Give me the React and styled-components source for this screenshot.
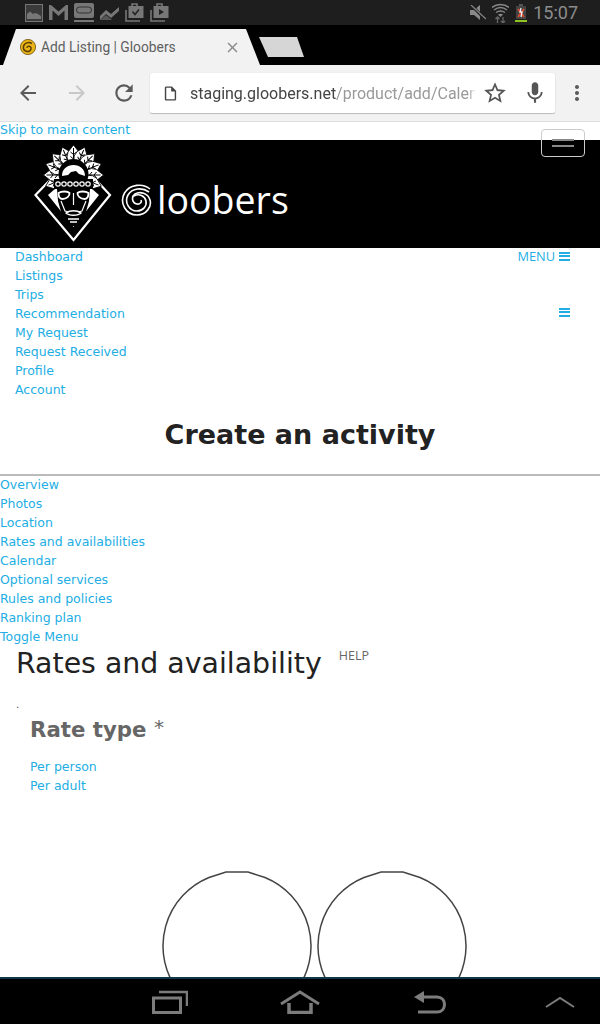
import React from 'react';
import styled, { createGlobalStyle } from 'styled-components';
import { MdArrowBack, MdArrowForward, MdRefresh, MdOutlineInsertDriveFile, MdStarBorder, MdMic, MdMoreVert, MdClose } from 'react-icons/md';

const GlobalStyle = createGlobalStyle`
	html, body { margin: 0; padding: 0; background: #fff; }
	body { font-family: "DejaVu Sans", sans-serif; }
	* { box-sizing: border-box; }
`;

const Screen = styled.div`
	width: 600px;
	height: 1024px;
	display: flex;
	flex-direction: column;
	overflow: hidden;
`;

const StatusBar = styled.div`
	height: 25px;
	flex: none;
	background: #1e1e1e;
	display: flex;
	align-items: center;
	justify-content: space-between;
	padding: 0 22px 0 25px;
	color: #777;
`;

const StatusGroup = styled.div`
	display: flex;
	align-items: center;
	gap: ${(p) => p.$gap || 6}px;
`;

const Clock = styled.span`
	font: 18px Roboto, sans-serif;
	color: #8c8c8c;
`;

const TabStrip = styled.div`
	height: 40px;
	flex: none;
	background: #000;
	display: flex;
	align-items: flex-end;
	padding-left: 3px;
`;

const Tab = styled.div`
	width: 257px;
	height: 36px;
	background: #f2f2f2;
	clip-path: polygon(0 100%, 13px 0, 243px 0, 100% 100%);
	display: flex;
	align-items: center;
	padding: 0 19px 0 17px;
	font: 13.8px Roboto, sans-serif;
	color: #5f5f5f;
`;

const TabTitle = styled.span`
	flex: 1;
	margin-left: 5px;
`;

const NewTab = styled.div`
	width: 45px;
	height: 20px;
	background: #d6d6d6;
	clip-path: polygon(0 0, 38px 0, 100% 100%, 9px 100%);
	margin: 0 0 8px -1px;
`;

const Toolbar = styled.div`
	height: 57px;
	flex: none;
	background: #f2f2f2;
	border-bottom: 1px solid #ddd;
	display: flex;
	align-items: center;
	color: #5a5a5a;
`;

const NavSlot = styled.div`
	width: ${(p) => p.$w}px;
	display: flex;
	justify-content: center;
	color: ${(p) => p.$color || '#5a5a5a'};
`;

const UrlBox = styled.div`
	width: 405px;
	height: 40px;
	margin: 0 10px 0 0;
	background: #fff;
	border-radius: 2px;
	box-shadow: 0 1px 1px #bbb, 0 0 1px #ccc;
	display: flex;
	align-items: center;
	padding-left: 12px;
`;

const UrlText = styled.div`
	width: 286px;
	margin-left: 11px;
	font: 16px Roboto, sans-serif;
	color: #9a9a9a;
	white-space: nowrap;
	overflow: hidden;
	mask-image: linear-gradient(to right, #000 278px, transparent 286px);
	b { font-weight: 400; color: #444; }
`;

const UrlIcon = styled.span`
	display: flex;
	width: 40px;
	justify-content: center;
	color: #555;
`;

const Page = styled.div`
	flex: 1;
	min-height: 0;
	overflow: hidden;
	position: relative;
	background: #fff;
	font-size: 12.5px;
	line-height: 17px;
	color: #22aee4;
`;

const SkipLink = styled.div`
	height: 18px;
	line-height: 15px;
`;

const Header = styled.div`
	height: 108px;
	background: #000;
	display: flex;
	align-items: flex-start;
	padding: 3px 0 0 30px;
`;

const WordMark = styled.div`
	display: flex;
	align-items: center;
	margin: 41px 0 0 1px;
	height: 32px;
	color: #fff;
	font: 500 37.5px/32px "Open Sans", sans-serif;
`;

const Swirl = styled.svg`
	margin-right: 4px;
`;

const Toggle = styled.div`
	position: absolute;
	top: 7px;
	right: 15px;
	width: 44px;
	height: 28px;
	border: 1px solid #ccc;
	border-radius: 4px;
	display: flex;
	flex-direction: column;
	align-items: center;
	justify-content: center;
	gap: 4px;
`;

const ToggleBar = styled.span`
	width: 22px;
	height: 2px;
	background: #888;
`;

const MainNav = styled.div`
	display: flex;
	justify-content: space-between;
	padding: 0 30px 0 15px;
`;

const RightCol = styled.div`
	display: flex;
	flex-direction: column;
	align-items: flex-end;
	gap: 38px;
`;

const MenuLabel = styled.div`
	display: flex;
	align-items: center;
	gap: 4px;
	height: 17px;
	font: 12.8px/17px "Open Sans", sans-serif;
`;

const Burger = styled.span`
	display: block;
	width: 11px;
	height: 9px;
	background: repeating-linear-gradient(to bottom, #22aee4 0, #22aee4 2px, transparent 2px, transparent 3.5px);
`;

const BurgerOnly = styled.div`
	display: flex;
	height: 19px;
	align-items: center;
`;

const NavItem = styled.div`
	height: 19px;
`;

const PageTitle = styled.h1`
	margin: 0;
	padding-top: 16px;
	font-size: 27px;
	line-height: 37px;
	font-weight: 700;
	color: #222;
	text-align: center;
	border-bottom: 2px solid #bbb;
	height: 76px;
`;

const SectionHead = styled.div`
	display: flex;
	align-items: flex-start;
	padding-left: 16px;
	height: 34px;
`;

const SectionTitle = styled.h2`
	margin: 0;
	font-size: 28.4px;
	line-height: 34px;
	font-weight: 400;
	color: #222;
`;

const Help = styled.span`
	margin: -1px 0 0 17px;
	font: 12.5px/19px "Open Sans", sans-serif;
	color: #666;
`;

const Dot = styled.div`
	padding: 15px 0 0 16px;
	height: 36px;
	font-size: 10px;
	color: #555;
`;

const FieldLabel = styled.div`
	padding-left: 30px;
	height: 27px;
	font-size: 21.3px;
	line-height: 20px;
	font-weight: 700;
	color: #666;
	span { font-weight: 400; font-size: 20px; vertical-align: 3px; }
`;

const RadioList = styled.div`
	padding: 14px 0 0 30px;
`;

const CircleRow = styled.div`
	display: flex;
	gap: 5px;
	margin-top: 75px;
	padding-left: 162px;
`;

const BottomBar = styled.div`
	height: 47px;
	flex: none;
	background: #000;
	border-top: 2px solid #10384a;
	display: grid;
	grid-template-columns: repeat(4, 130px);
	padding-left: 105px;
	align-items: center;
	justify-items: center;
	color: #7c7c7c;
`;

const Favicon = () => (
	<svg width="16" height="16" viewBox="0 0 16 16">
		<circle cx="8" cy="8" r="7.6" fill="#e8b416" stroke="#6e4f08" strokeWidth="0.8" />
		<path d="M12 4.6C9 2.6 4 3.6 3.4 8c-.4 3.4 2.8 5 5.200 4.400 2.400-.6 3.200-3.400 1.800-4.600-1.400-1.200-3.600-.4-3.400 1.200" fill="none" stroke="#5a3d06" strokeWidth="1.5" />
	</svg>
);

const PictureIcon = () => (
	<svg width="18" height="18" viewBox="0 0 18 18">
		<rect x="0.5" y="0.5" width="17" height="17" fill="#3a3a3a" stroke="#777" />
		<path d="M2 15V10l3-2.500 3 2.500 2-1 3 1 3 2v3z" fill="#777" />
	</svg>
);

const MailIcon = () => (
	<svg width="19" height="15" viewBox="0 0 19 15">
		<path d="M0 0h2l7.500 6.500L17 0h2v15h-3.500V5.500L9.500 11 3.500 5.500V15H0z" fill="#777" />
	</svg>
);

const CardIcon = () => (
	<svg width="20" height="19" viewBox="0 0 20 19">
		<rect x="0" y="0" width="20" height="15" rx="2" fill="#777" />
		<rect x="2.5" y="4" width="15" height="6" rx="3" fill="none" stroke="#333" />
		<rect x="0" y="17" width="20" height="2" fill="#777" />
	</svg>
);

const ChartIcon = () => (
	<svg width="19" height="14" viewBox="0 0 19 14">
		<path d="M0 10l6-6 5 4 8-7v4l-8 7-5-4-6 6z" fill="#777" />
		<path d="M0 14l6-5 5 4 1 1H0z" fill="#555" />
	</svg>
);

const BagIcon = ({ play }) => (
	<svg width="19" height="19" viewBox="0 0 19 19">
		<path d="M1 7v11h14" fill="none" stroke="#777" strokeWidth="1.6" />
		<path d="M7 3V1h5v2" fill="none" stroke="#777" strokeWidth="1.6" />
		<rect x="3.5" y="3" width="15" height="12" fill="#777" />
		{play
			? <path d="M9 6l5 3-5 3z" fill="#222" />
			: <path d="M7.5 8.5l2.500 3 4-5" fill="none" stroke="#222" strokeWidth="1.5" />}
	</svg>
);

const MuteIcon = () => (
	<svg width="16" height="15" viewBox="0 0 16 15">
		<path d="M0 5h4l6-5v15l-6-5H0z" fill="#888" />
		<path d="M1 0l15 15" stroke="#1e1e1e" strokeWidth="3" />
		<path d="M1 0l15 14" stroke="#888" strokeWidth="1.2" />
	</svg>
);

const WifiIcon = () => (
	<svg width="17" height="20" viewBox="0 0 17 20">
		<path d="M0 4.500C4.500 .5 12.500.5 17 4.500M2 7c4-3 9-3 13 0M4 9.500c3-2 6-2 9 0" fill="none" stroke="#888" strokeWidth="1.5" />
		<path d="M6 11.500c1.500-1 3.500-1 5 0L8.500 14z" fill="#888" />
		<path d="M5.500 20v-6M3.500 16l2-2 2 2M11 14v6M9 18l2 2 2-2" fill="none" stroke="#666" strokeWidth="1.3" />
	</svg>
);

const BatteryIcon = () => (
	<svg width="12" height="18" viewBox="0 0 12 18">
		<rect x="4" y="0" width="4" height="2" fill="#555" />
		<rect x="1" y="2" width="10" height="13" fill="#444" />
		<path d="M3 5l6 8M9 5l-6 8" stroke="#e0462a" strokeWidth="1.8" />
		<path d="M6 4l-1 4h2l-1 5" fill="none" stroke="#eee" strokeWidth="1.3" />
		<rect x="0" y="16" width="12" height="2" fill="#8fc31f" />
	</svg>
);

const feathers = [-112, -90, -68, -45, -22, 0, 22, 45, 68, 90, 112];

const TribalLogo = () => (
	<svg width="90" height="100" viewBox="0 0 90 100">
		{/* diamond frame */}
		<path d="M20 37L5.500 52l38 45L80 52 67 38" fill="none" stroke="#fff" strokeWidth="2.2" />
		<path d="M26 45l-8 7 25.500 32L69 52l-8-7z" fill="#fff" />
		{/* feathers */}
		{feathers.map((a) => (
			<g key={a} transform={`rotate(${a} 43.5 32)`}>
				<path d="M43.500 2l-5.500 7-1 5 3 10h7l3-10-1-5z" fill="#fff" stroke="#000" strokeWidth="0.8" />
				<path d="M43.500 5v15M40.500 9l3 2.500 3-2.500M40.500 13.500l3 2.500 3-2.500" fill="none" stroke="#000" strokeWidth="1" />
			</g>
		))}
		{/* crown */}
		<circle cx="43.5" cy="31" r="15" fill="#000" />
		<path d="M32 33c0-7 5-11 11.500-11S55 26 55 33l-6-2-3-3-5 1-3 3z" fill="#fff" />
		<rect x="24" y="36" width="39" height="10" fill="#000" />
		{[28, 34, 40, 46, 52, 58].map((x) => (
			<circle key={x} cx={x} cy="41" r="2.2" fill="#000" stroke="#fff" strokeWidth="1.2" />
		))}
		{/* mask */}
		<path d="M27 46h33l-1 12-5 18-5 7h-11l-5-7-5-18z" fill="#000" />
		<g fill="none" stroke="#fff">
			<path d="M28.500 50c3-2 9-2 11 0 .5 3-3 6-7 6-3 0-4-3-4-6z" strokeWidth="1.8" />
			<path d="M58.500 50c-3-2-9-2-11 0-.5 3 3 6 7 6 3 0 4-3 4-6z" strokeWidth="1.8" />
			<path d="M31 58l4 10 4 1M56 58l-4 10-4 1M43.500 50v12" strokeWidth="1.2" />
			<path d="M36 70c4-3 11-3 15 0-3 3-12 3-15 0z" strokeWidth="1.4" />
			<path d="M38 76h11M40 79h7" strokeWidth="1.4" />
		</g>
	</svg>
);

const Circle = () => (
	<svg width="150" height="150" viewBox="0 0 150 150">
		<path d="M64 1L86 1L103 6.500A74 74 0 1 1 47 6.500Z" fill="#fff" stroke="#444" strokeWidth="1.5" />
	</svg>
);

const mainLinks = ['Dashboard', 'Listings', 'Trips', 'Recommendation', 'My Request', 'Request Received', 'Profile', 'Account'];
const subLinks = ['Overview', 'Photos', 'Location', 'Rates and availabilities', 'Calendar', 'Optional services', 'Rules and policies', 'Ranking plan', 'Toggle Menu'];

export default function App() {
	return (
		<Screen>
			<GlobalStyle />
			<StatusBar>
				<StatusGroup>
					<PictureIcon />
					<MailIcon />
					<CardIcon />
					<ChartIcon />
					<BagIcon />
					<BagIcon play />
				</StatusGroup>
				<StatusGroup $gap={6}>
					<MuteIcon />
					<WifiIcon />
					<BatteryIcon />
					<Clock>15:07</Clock>
				</StatusGroup>
			</StatusBar>
			<TabStrip>
				<Tab>
					<Favicon />
					<TabTitle>Add Listing | Gloobers</TabTitle>
					<MdClose size={17} color="#8a8a8a" />
				</Tab>
				<NewTab />
			</TabStrip>
			<Toolbar>
				<NavSlot $w={56}><MdArrowBack size={24} /></NavSlot>
				<NavSlot $w={42} $color="#c8c8c8"><MdArrowForward size={24} /></NavSlot>
				<NavSlot $w={52}><MdRefresh size={26} /></NavSlot>
				<UrlBox>
					<MdOutlineInsertDriveFile size={17} color="#444" />
					<UrlText><b>staging.gloobers.net</b>/product/add/Calendar</UrlText>
					<UrlIcon><MdStarBorder size={26} /></UrlIcon>
					<UrlIcon><MdMic size={26} /></UrlIcon>
				</UrlBox>
				<MdMoreVert size={24} />
			</Toolbar>
			<Page>
				<SkipLink>Skip to main content</SkipLink>
				<Header>
					<TribalLogo />
					<WordMark>
						<Swirl width="32" height="32" viewBox="0 0 32 32">
							<path d="M29 5C22-1 9 0 3.500 9-2 19 5 31 16 31c9 0 15-8 13-15-2-7-10-9-15-6-4 3-3 9 2 10 3 .5 5-2 4-4" fill="none" stroke="#fff" strokeWidth="1.6" />
							<path d="M28 8C21 3 11 4 7 11 3 18 8 27 16 27c6 0 10-5 9-10-1-5-7-8-12-5" fill="none" stroke="#fff" strokeWidth="1.6" />
						</Swirl>
						loobers
					</WordMark>
				</Header>
				<Toggle>
					<ToggleBar />
					<ToggleBar />
				</Toggle>
				<MainNav>
					<div>
						{mainLinks.map((l) => <NavItem key={l}>{l}</NavItem>)}
					</div>
					<RightCol>
						<MenuLabel>MENU<Burger /></MenuLabel>
						<BurgerOnly><Burger /></BurgerOnly>
					</RightCol>
				</MainNav>
				<PageTitle>Create an activity</PageTitle>
				<div>
					{subLinks.map((l) => <NavItem key={l}>{l}</NavItem>)}
				</div>
				<SectionHead>
					<SectionTitle>Rates and availability</SectionTitle>
					<Help>HELP</Help>
				</SectionHead>
				<Dot>.</Dot>
				<FieldLabel>Rate type <span>*</span></FieldLabel>
				<RadioList>
					<NavItem>Per person</NavItem>
					<NavItem>Per adult</NavItem>
				</RadioList>
				<CircleRow>
					<Circle />
					<Circle />
				</CircleRow>
			</Page>
			<BottomBar>
				<svg width="36" height="24" viewBox="0 0 36 24">
					<path d="M7 2h28v14" fill="none" stroke="#7c7c7c" strokeWidth="2.5" />
					<rect x="1.5" y="8" width="27" height="14.5" fill="none" stroke="#7c7c7c" strokeWidth="3" />
				</svg>
				<svg width="40" height="24" viewBox="0 0 40 24">
					<path d="M1 14L20 2l19 12" fill="none" stroke="#7c7c7c" strokeWidth="3" />
					<path d="M9 13v9.500h22V13" fill="none" stroke="#7c7c7c" strokeWidth="3.5" />
				</svg>
				<svg width="32" height="24" viewBox="0 0 32 24">
					<path d="M0 7l10-6v12z" fill="#7c7c7c" />
					<path d="M8 7h15c10 0 10 15 0 15H4" fill="none" stroke="#7c7c7c" strokeWidth="3" />
				</svg>
				<svg width="30" height="12" viewBox="0 0 30 12">
					<path d="M1 11L15 2l14 9" fill="none" stroke="#7c7c7c" strokeWidth="2" />
				</svg>
			</BottomBar>
		</Screen>
	);
}
